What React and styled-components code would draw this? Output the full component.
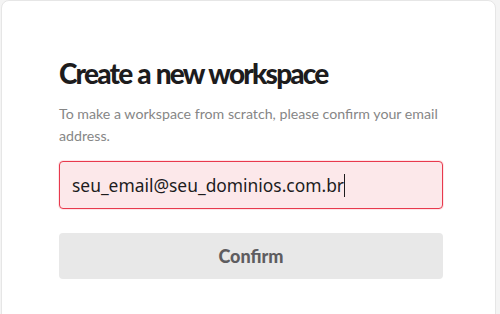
import styled, { createGlobalStyle } from 'styled-components';

const GlobalStyle = createGlobalStyle`
  html, body {
    margin: 0;
    padding: 0;
    background: #f4f4f4;
    height: 100%;
    overflow: hidden;
  }
  * { box-sizing: border-box; }
`;

function App() {
  return (
    <>
      <GlobalStyle />
      <Page>
        <Card>
          <Title>Create a new workspace</Title>
          <Lead>To make a workspace from scratch, please confirm your email address.</Lead>
          <EmailField>
            <EmailText>seu_email@seu_dominios.com.br</EmailText>
            <Caret />
          </EmailField>
          <ConfirmButton type="button">Confirm</ConfirmButton>
        </Card>
      </Page>
    </>
  );
}

export default App;

const Page = styled.main`
  width: 500px;
  height: 314px;
  padding: 0 4px 0 1px;
  overflow: hidden;
`;

const Card = styled.section`
  height: 330px;
  background: #fff;
  border: 1px solid #e6e6e6;
  border-radius: 8px;
  padding: 54px 0 0 57px;
  display: flex;
  flex-direction: column;
  align-items: flex-start;
`;

const Title = styled.h1`
  margin: 0;
  font-family: Lato, 'Liberation Sans', sans-serif;
  font-weight: 900;
  font-size: 28px;
  line-height: 36px;
  letter-spacing: -1.8px;
  word-spacing: 1px;
  color: #1d1c1d;
`;

const Lead = styled.p`
  margin: 12px 0 0;
  width: 395px;
  font-family: Lato, 'Liberation Sans', sans-serif;
  font-size: 14.2px;
  line-height: 22px;
  color: #868686;
`;

const EmailField = styled.div`
  margin-top: 14px;
  width: 384px;
  height: 48px;
  display: flex;
  align-items: center;
  padding: 0 12px;
  background: #fce8ea;
  border: 1px solid #e8394d;
  border-radius: 4px;
  box-shadow: 0 0 0 1px rgba(232, 57, 77, 0.12);
`;

const EmailText = styled.span`
  font-family: 'Noto Sans', 'Open Sans', sans-serif;
  font-size: 17.4px;
  color: #1d1c1d;
`;

const Caret = styled.span`
  width: 1px;
  height: 23px;
  margin-left: 0;
  background: #1d1c1d;
`;

const ConfirmButton = styled.button`
  margin-top: 24px;
  width: 384px;
  height: 46px;
  border: none;
  border-radius: 4px;
  background: #e8e8e8;
  font-family: Lato, 'Liberation Sans', sans-serif;
  font-weight: 900;
  font-size: 18px;
  color: #5e5d60;
  cursor: default;
`;
